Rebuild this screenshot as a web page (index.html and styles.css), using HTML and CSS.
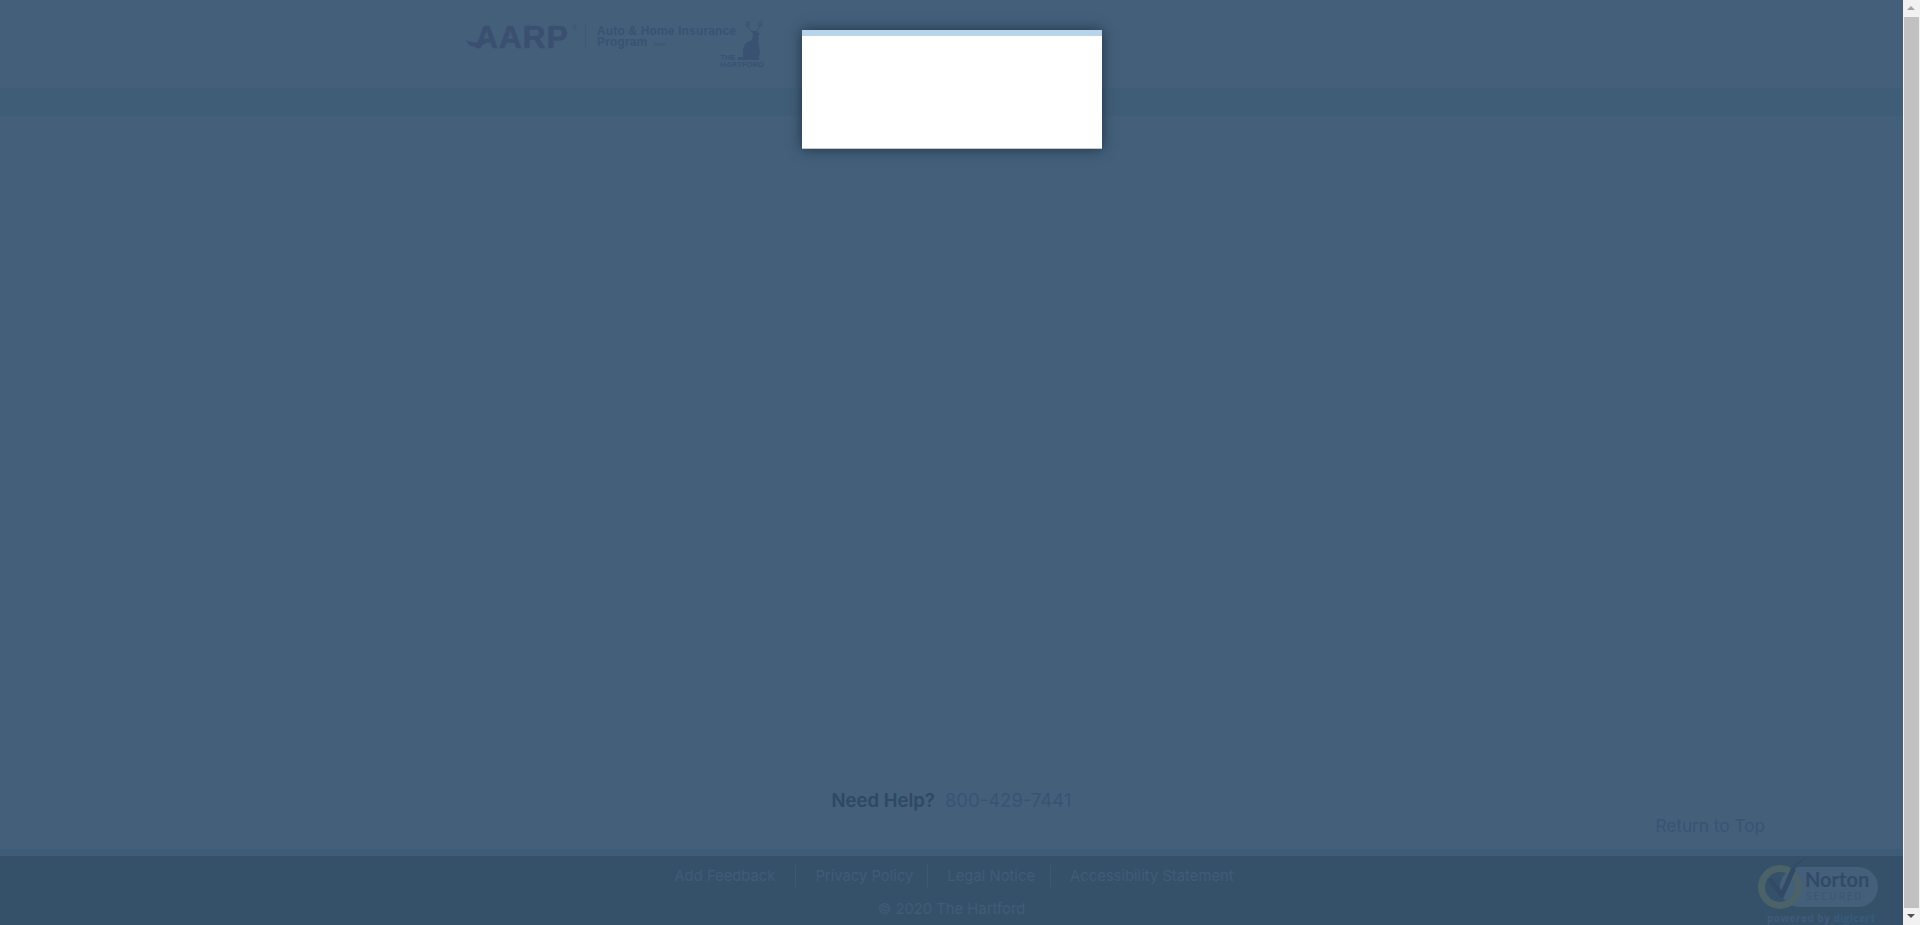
FILE: index.html
```html
<!DOCTYPE html>
<html lang="en">
<head>
<meta charset="utf-8">
<title>AARP Auto &amp; Home Insurance Program from The Hartford</title>
<link rel="stylesheet" href="styles.css">
</head>
<body>
<div class="window">
  <div class="page">
    <header class="header">
      <div class="brand">
        <div class="aarp">
          <svg class="swoosh" viewBox="0 0 30 14" aria-hidden="true"><path d="M0 4 C7 8 14 7 22 2 L22 6 C15 11 7 12 3 9 Z"/></svg>
          <span class="aarp-word">AARP</span><span class="reg">®</span>
        </div>
        <div class="program">
          <div>Auto &amp; Home Insurance</div>
          <div>Program <small>from</small></div>
        </div>
        <div class="hartford">
          <svg class="stag" viewBox="0 0 26 40" aria-hidden="true">
            <path class="antler" d="M8 1 L10 7 L14 12 M11 1 L11 6 M7 5 L10 7 M24 0 L22 6 L18 12 M21 1 L21 7 M25 5 L22 6"/>
            <path d="M14 11 L19 11 L22 14 L20 16 L21 19 L20 21 L21 26 L22 33 L21 37 L21 40 L0 40 L0 37 L5 37 L5 30 Q6 22 14 20 L15 15 Z"/>
          </svg>
          <div class="hartford-word"><div>THE</div><div>HARTFORD</div></div>
        </div>
      </div>
    </header>
    <div class="band"></div>
    <main class="content">
      <div class="help"><b>Need Help?</b><span>800-429-7441</span></div>
      <div class="top-link">Return to Top</div>
    </main>
    <div class="strip"></div>
    <footer class="footer">
      <nav class="links">
        <a>Add Feedback</a><a>Privacy Policy</a><a>Legal Notice</a><a>Accessibility Statement</a>
      </nav>
      <div class="copy">© 2020 The Hartford</div>
      <div class="norton">
        <svg class="seal" viewBox="0 0 125 69" aria-hidden="true">
          <rect class="pill" x="23" y="11" width="98" height="40" rx="20"/>
          <circle class="ring" cx="23" cy="31" r="18.5"/>
          <path class="tick" d="M14 25 L25 39 L36 14"/>
          <g class="dots"><circle cx="38" cy="10" r="1.8"/><circle cx="41" cy="7" r="1.5"/><circle cx="44" cy="5" r="1.2"/><circle cx="47" cy="2" r="1"/></g>
        </svg>
        <div class="norton-word">Norton</div>
        <div class="secured">SECURED</div>
        <div class="powered">powered by <em>digicert</em></div>
      </div>
    </footer>
  </div>
  <div class="scrollbar">
    <div class="arrow up"></div>
    <div class="thumb"></div>
    <div class="arrow down"></div>
  </div>
  <div class="modal"><div class="modal-bar"></div></div>
</div>
</body>
</html>
```
FILE: styles.css
```css
* { box-sizing: border-box; }
html, body { margin: 0; height: 100%; overflow: hidden; }
body { font-family: "Inter", "Liberation Sans", sans-serif; background: #435f7a; }
.window { display: flex; height: 925px; position: relative; }
.page { flex: 1; display: flex; flex-direction: column; min-width: 0; }

.header { height: 88px; background: #445f7a; padding: 24px 0 0 465px; }
.brand { display: flex; align-items: flex-start; color: #3a5272; }
.aarp { position: relative; width: 121px; height: 24px; border-right: 1px solid #40597a; padding-left: 10px; }
.aarp-word { font: 700 32px/26px "Liberation Sans", sans-serif; letter-spacing: .7px; color: #3b5070; -webkit-text-stroke: .5px #3b5070; display: block; }
.swoosh { position: absolute; left: 1px; top: 12px; width: 30px; height: 14px; fill: #3b5070; }
.reg { position: absolute; left: 107px; top: 0; font: 400 7px/8px "Liberation Sans", sans-serif; }
.program { margin: 2px 0 0 11px; width: 146px; font: 700 12px/11px "Liberation Sans", sans-serif; letter-spacing: .15px; }
.program small { font-size: 6px; font-weight: 400; margin-left: 3px; }
.hartford { position: relative; width: 46px; height: 46px; margin-left: -24px; }
.stag { position: absolute; left: 19px; top: -4px; width: 26px; height: 40px; fill: #3a5272; }
.antler { fill: none; stroke: #3a5272; stroke-width: 1; }
.hartford-word { position: absolute; left: 1px; top: 30px; font: 700 8px/7px "Liberation Sans", sans-serif; letter-spacing: -.1px; }

.band { height: 28px; background: #405d78; }
.content { flex: 1; background: #435f7a; padding-top: 671px; display: flex; flex-direction: column; }
.help { display: flex; justify-content: center; gap: 10px; font: 400 18.5px/26px "Inter", sans-serif; color: #385472; }
.help b { color: #2f4865; font-weight: 600; }
.top-link { align-self: flex-end; margin: 1px 138px 0 0; font: 400 17.2px/24px "Inter", sans-serif; color: #385472; }
.strip { height: 7px; background: #3e5c78; }

.footer { position: relative; height: 69px; background: #355169; color: #415b78; text-align: center; font: 400 14.8px/20px "Inter", sans-serif; }
.links { display: flex; justify-content: center; padding-top: 9px; }
.links a { padding: 0 15px 0 19px; border-left: 1px solid #3d5874; line-height: 22px; }
.links a:first-child { border-left: 0; padding-right: 20px; }
.links a:nth-child(2) { padding-right: 14px; }
.links a:last-child { padding-right: 14px; }
.copy { margin-top: 12px; }

.norton { position: absolute; left: 1757px; top: 0; width: 125px; height: 69px; overflow: hidden; text-align: left; }
.seal { position: absolute; left: 0; top: 0; width: 125px; height: 69px; }
.pill { fill: #435f7a; }
.ring { fill: none; stroke: #4b6268; stroke-width: 7; }
.tick { fill: none; stroke: #324a66; stroke-width: 5; stroke-linecap: round; stroke-linejoin: round; }
.dots { fill: #324a66; }
.norton-word { position: absolute; left: 48px; top: 11px; font: 700 20px/24px "Lato", sans-serif; color: #324a66; }
.secured { position: absolute; left: 49px; top: 34px; font: 400 10px/12px "Open Sans", sans-serif; letter-spacing: 2px; color: #3b5672; }
.powered { position: absolute; left: 10px; top: 55px; font: 700 10px/14px "Open Sans", sans-serif; letter-spacing: .5px; color: #40597a; white-space: nowrap; }
.powered em { font-style: normal; color: #375a7b; }

.scrollbar { width: 17px; background: #f1f1f1; display: flex; flex-direction: column; align-items: center; }
.thumb { flex: 1; width: 15px; background: #c1c1c1; }
.arrow { height: 17px; width: 100%; position: relative; flex: none; }
.arrow::after { content: ""; position: absolute; left: 4px; border-left: 4px solid transparent; border-right: 4px solid transparent; }
.arrow.up::after { top: 6px; border-bottom: 4px solid #a3a3a3; }
.arrow.down::after { top: 6px; border-top: 4px solid #505050; }

.modal { position: absolute; left: 802px; top: 30px; width: 300px; height: 119px; background: #fff; border-bottom: 1px solid #c8c8c8; box-shadow: 0 0 12px rgba(22, 36, 52, .75); }
.modal-bar { height: 6px; background: #b8d4ea; }
```
